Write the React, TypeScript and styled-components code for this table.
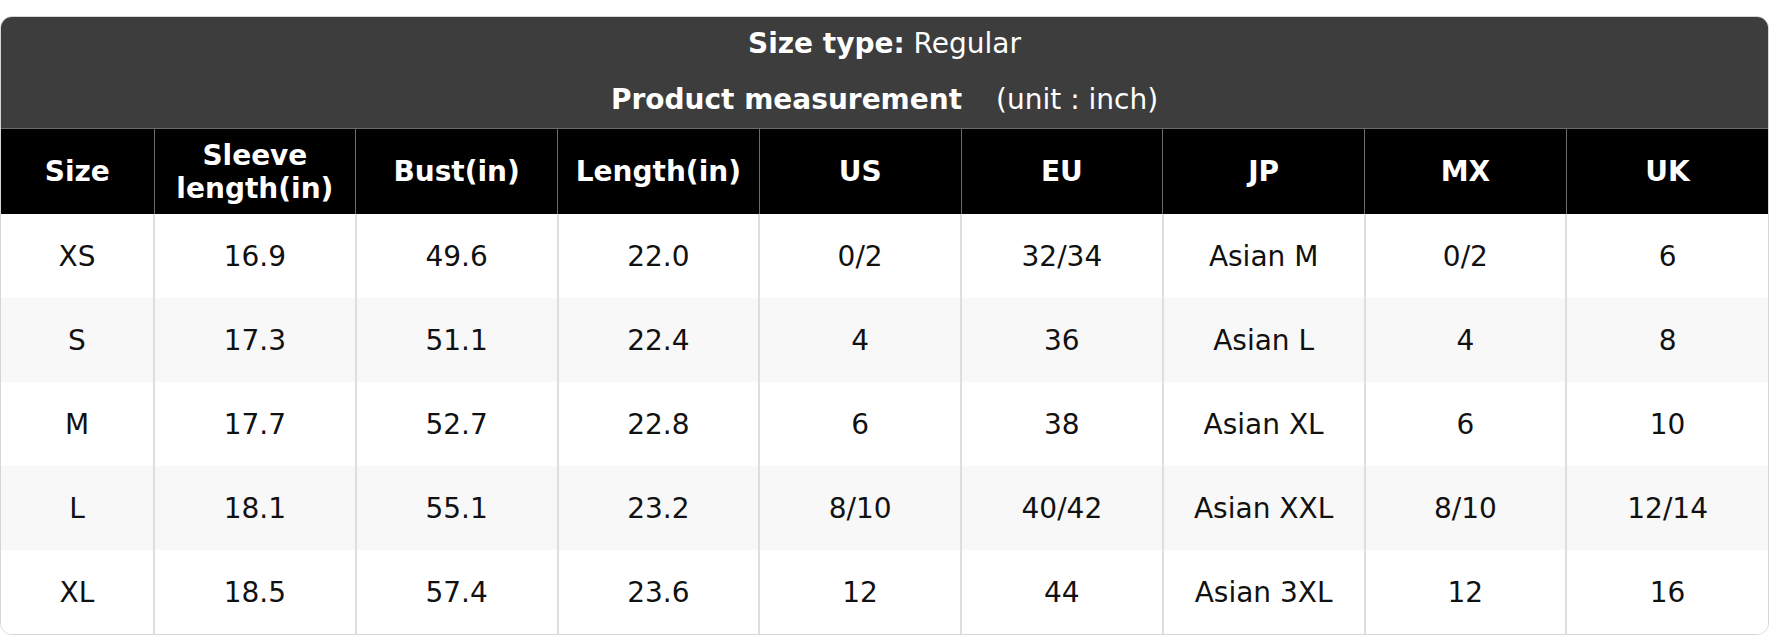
import React from "react";
import styled, { createGlobalStyle } from "styled-components";

const GlobalStyle = createGlobalStyle`
	html, body {
		margin: 0;
		padding: 0;
		background: #fff;
	}
	body {
		font-family: "DejaVu Sans", "Noto Sans", sans-serif;
	}
`;

const Card = styled.div`
	margin-top: 16px;
	width: 1769px;
	box-sizing: border-box;
	border: 1px solid #d6d6d6;
	border-radius: 12px;
	overflow: hidden;
	background: #fff;
`;

const Title = styled.div`
	background: #3d3d3d;
	color: #fff;
	text-align: center;
	padding: 10px 0 11px;
	font-size: 28px;
	line-height: 34px;
	display: flex;
	flex-direction: column;
	gap: 22px;
	border-bottom: 1px solid #6a6a6a;
`;

const Strong = styled.strong`
	font-weight: bold;
`;

const Unit = styled.span`
	margin-left: 34px;
`;

const Table = styled.table`
	width: 100%;
	border-collapse: collapse;
	table-layout: fixed;
`;

const Th = styled.th`
	background: #000;
	color: #fff;
	font-size: 28px;
	font-weight: bold;
	line-height: 33px;
	height: 85px;
	padding: 0 4px;
	text-align: center;
	border-left: 1px solid #6a6a6a;
	&:first-child {
		border-left: 0;
	}
`;

const Row = styled.tr<{ $striped: boolean }>`
	background: ${(p) => (p.$striped ? "#f8f8f8" : "#fff")};
`;

const Td = styled.td`
	height: 84px;
	padding: 0;
	text-align: center;
	font-size: 28px;
	color: #111;
	border-left: 2px solid #dedede;
	&:first-child {
		border-left: 0;
	}
`;

const columns = [
	"Size",
	"Sleeve length(in)",
	"Bust(in)",
	"Length(in)",
	"US",
	"EU",
	"JP",
	"MX",
	"UK",
];

const rows = [
	["XS", "16.9", "49.6", "22.0", "0/2", "32/34", "Asian M", "0/2", "6"],
	["S", "17.3", "51.1", "22.4", "4", "36", "Asian L", "4", "8"],
	["M", "17.7", "52.7", "22.8", "6", "38", "Asian XL", "6", "10"],
	["L", "18.1", "55.1", "23.2", "8/10", "40/42", "Asian XXL", "8/10", "12/14"],
	["XL", "18.5", "57.4", "23.6", "12", "44", "Asian 3XL", "12", "16"],
];

const App: React.FC = () => {
	return (
		<>
			<GlobalStyle />
			<Card>
				<Title>
					<div>
						<Strong>Size type:</Strong> Regular
					</div>
					<div>
						<Strong>Product measurement</Strong>
						<Unit>(unit : inch)</Unit>
					</div>
				</Title>
				<Table>
					<colgroup>
						<col style={{ width: 153 }} />
						{columns.slice(1).map((c) => (
							<col key={c} />
						))}
					</colgroup>
					<thead>
						<tr>
							{columns.map((c) => (
								<Th key={c}>{c}</Th>
							))}
						</tr>
					</thead>
					<tbody>
						{rows.map((r, i) => (
							<Row key={r[0]} $striped={i % 2 === 1}>
								{r.map((v, j) => (
									<Td key={j}>{v}</Td>
								))}
							</Row>
						))}
					</tbody>
				</Table>
			</Card>
		</>
	);
};

export default App;
